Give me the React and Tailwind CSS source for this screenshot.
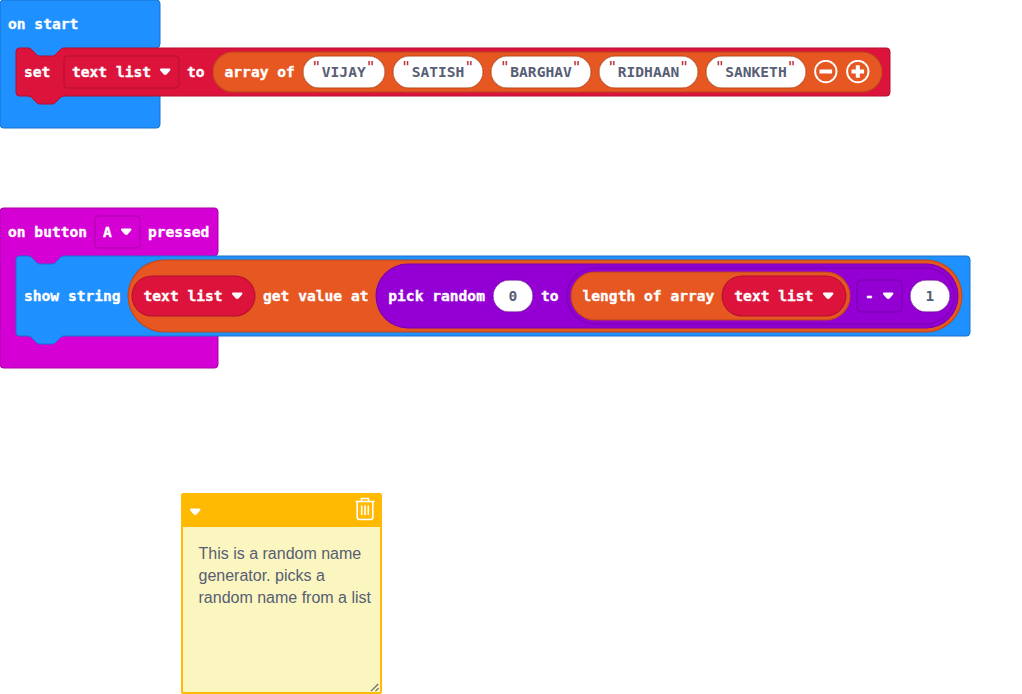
import React from "react";

const BLUE = "bg-[#1e90ff] shadow-[0_0_0_0.5px_#1873cc,inset_0_0_0_0.5px_#1873cc]";
const RED = "bg-[#dc143c] shadow-[0_0_0_0.5px_#b01030,inset_0_0_0_0.5px_#b01030]";
const ORANGE = "bg-[#e65722] shadow-[0_0_0_0.5px_#b8461b,inset_0_0_0_0.5px_#b8461b]";
const MAGENTA = "bg-[#d400d4] shadow-[0_0_0_0.5px_#aa00aa,inset_0_0_0_0.5px_#aa00aa]";
const PURPLE = "bg-[#9400d3] shadow-[0_0_0_0.5px_#7600a9,inset_0_0_0_0.5px_#7600a9]";

const NOTCH = "c2,0 3,1 4,2 l4,4 c1,1 2,2 4,2 h12 c2,0 3,-1 4,-2 l4,-4 c1,-1 2,-2 4,-2";

function Label({ children, className = "" }) {
  return <span className={"shrink-0 whitespace-pre [-webkit-text-stroke:0.35px_currentColor] " + className}>{children}</span>;
}

function Arrow({ className = "" }) {
  return (
    <svg width="12" height="8" viewBox="0 0 12 8" className={"shrink-0 " + className}>
      <path
        d="M2 0.4 H10.4 C11.4 0.4 11.8 1.6 11.1 2.4 L7.8 6.2 C6.9 7.2 5.5 7.2 4.6 6.2 L1.3 2.4 C0.6 1.6 1 0.4 2 0.4 Z"
        fill="#fff"
      />
    </svg>
  );
}

function Dropdown({ text, className = "" }) {
  return (
    <div className={"flex h-8 shrink-0 items-center justify-between rounded-[4px] pr-[8px] pl-2 " + className}>
      <Label>{text}</Label>
      <Arrow />
    </div>
  );
}

function Variable({ className = "" }) {
  return (
    <div className={"flex h-10 w-[123.5px] shrink-0 items-center justify-between rounded-full pr-[12px] pl-3 " + RED + " " + className}>
      <Label>text list</Label>
      <Arrow />
    </div>
  );
}

function TextField({ text, className }) {
  return (
    <div
      className={
        "flex h-8 shrink-0 items-center justify-center rounded-full bg-white text-[#575e75] shadow-[0_0_0_0.5px_#b8461b,inset_0_0_0_0.5px_#b8461b] " +
        className
      }
    >
      <span className="-mt-2 w-[9.3px] text-[16px] font-normal text-[#b3262e] -indent-[1px]">"</span>
      <span className="shrink-0">{text}</span>
      <span className="-mt-2 w-[9.3px] text-[16px] font-normal text-[#b3262e]">"</span>
    </div>
  );
}

function NumberField({ value }) {
  return (
    <div className="flex h-8 w-10 shrink-0 items-center justify-center rounded-full bg-white text-[#575e75] shadow-[0_0_0_0.5px_#7600a9,inset_0_0_0_0.5px_#7600a9]">
      {value}
    </div>
  );
}

function RoundButton({ plus = false }) {
  return (
    <svg width="24" height="24" viewBox="0 0 24 24" className="shrink-0">
      <circle cx="11.8" cy="11.5" r="10.7" fill="none" stroke="#fff" strokeWidth="1.9" />
      <path d={plus ? "M5.5 11.5 H18.1 M11.8 5.2 V17.8" : "M5.5 11.5 H18.1"} stroke="#fff" strokeWidth="4" />
    </svg>
  );
}

function Statement({ className, parent, fill, line, children }) {
  return (
    <div className={"relative ml-4 flex shrink-0 items-center rounded-[4px] pl-2 " + className}>
      <svg width="40" height="11" viewBox="0 0 40 11" className="absolute top-[-1px] left-[10px]">
        <path d={"M2,0 V1 " + NOTCH + " V0 Z"} fill={parent} />
        <path d={"M2,1 " + NOTCH} fill="none" stroke={line} />
      </svg>
      <svg width="40" height="11" viewBox="0 0 40 11" className="absolute bottom-[-9px] left-[10px]">
        <path d={"M2,0 V2 " + NOTCH + " V0 Z"} fill={fill} />
        <path d={"M2,2 " + NOTCH} fill="none" stroke={line} />
      </svg>
      {children}
    </div>
  );
}

function EventBlock({ className, header, line, children }) {
  return (
    <div className={"flex flex-col rounded-[4px] " + className}>
      <div className="relative flex h-12 shrink-0 items-center pl-2">
        {header}
        <svg width="5" height="5" viewBox="0 0 5 5" className="absolute right-[-1px] bottom-0">
          <path d="M5,0 H4 C4,3 3,5 0,5 H5 Z" fill="#fff" />
          <path d="M4,0 V1 A4,4 0 0 1 0,5" fill="none" stroke={line} />
        </svg>
      </div>
      {children}
    </div>
  );
}

function Note() {
  return (
    <div className="absolute top-[493px] left-[181px] flex h-[201px] w-[201px] flex-col rounded-[2px] border-2 border-[#ffbb05] bg-[#fbf5bf]">
      <div className="flex h-8 shrink-0 items-start justify-between bg-[#ffb900] pr-[5px] pl-[6px]">
        <Arrow className="mt-[12.5px]" />
        <svg width="20" height="24" viewBox="0 0 20 24" className="mt-[2px]" fill="none" stroke="#fff" strokeWidth="1.6">
          <path d="M0.5 4.5 H19.5 M6.5 4.5 V1.5 H13.5 V4.5 M2.2 4.5 V20 Q2.2 22.5 4.5 22.5 H15.5 Q17.8 22.5 17.8 20 V4.5" />
          <path d="M6.7 8.5 V18 M10 8.5 V18 M13.3 8.5 V18" />
        </svg>
      </div>
      <p className="w-[192px] pt-[16px] pl-[15.5px] font-['Liberation_Sans',sans-serif] text-[16px] leading-[22px] font-normal text-[#575e75]">
        This is a random name
        <br />
        generator. picks a
        <br />
        random name from a list
      </p>
      <svg width="10" height="9" viewBox="0 0 10 9" className="mt-auto self-end" stroke="#666a62" strokeWidth="1.2">
        <path d="M1 8.2 L8.2 1 M5.5 8.2 L8.6 5.1" />
      </svg>
    </div>
  );
}

export default function App() {
  return (
    <div className="relative h-[694px] w-[1022px] overflow-hidden bg-white font-['DejaVu_Sans_Mono',monospace] text-[14.6px] leading-4 font-bold text-white">
      <EventBlock
        className={"absolute top-0 left-0 h-32 w-40 " + BLUE}
        line="#1873cc"
        header={<Label>on start</Label>}
      >
        <Statement className={"h-12 w-[874px] " + RED} parent="#1e90ff" fill="#dc143c" line="#b01030">
          <Label>set</Label>
          <Dropdown text="text list" className="ml-[13.6px] w-[115px] shadow-[0_0_0_0.5px_#b01030,inset_0_0_0_0.5px_#b01030]" />
          <Label className="ml-2">to</Label>
          <div className={"ml-2 flex h-10 w-[669px] shrink-0 items-center gap-[8.05px] rounded-full pl-[12px] " + ORANGE}>
            <Label>array of</Label>
            <TextField text="VIJAY" className="w-[81.8px]" />
            <TextField text="SATISH" className="w-[90.6px]" />
            <TextField text="BARGHAV" className="w-[99.4px]" />
            <TextField text="RIDHAAN" className="w-[99.4px]" />
            <TextField text="SANKETH" className="w-[99.4px]" />
            <RoundButton />
            <RoundButton plus />
          </div>
        </Statement>
      </EventBlock>

      <EventBlock
        className={"absolute top-52 left-0 h-40 w-[217.5px] " + MAGENTA}
        line="#aa00aa"
        header={
          <>
            <Label>on button</Label>
            <Dropdown text="A" className="mx-2 w-[44.8px] shadow-[0_0_0_0.5px_#aa00aa,inset_0_0_0_0.5px_#aa00aa]" />
            <Label>pressed</Label>
          </>
        }
      >
        <Statement className={"h-20 w-[954px] " + BLUE} parent="#d400d4" fill="#1e90ff" line="#1873cc">
          <Label>show string</Label>
          <div className={"ml-[7.4px] flex h-18 w-[834px] shrink-0 items-center rounded-full pl-[3.5px] " + ORANGE}>
            <Variable />
            <Label className="ml-2">get value at</Label>
            <div className={"ml-[7.8px] flex h-16 w-[582px] shrink-0 items-center rounded-full pl-3 " + PURPLE}>
              <Label>pick random</Label>
              <div className="ml-2 flex">
                <NumberField value="0" />
              </div>
              <Label className="ml-2">to</Label>
              <div className={"ml-[8px] flex h-14 w-[387.5px] shrink-0 items-center rounded-full pl-[4px] " + PURPLE}>
                <div className={"flex h-12 w-[279px] shrink-0 items-center rounded-full pl-3 " + ORANGE}>
                  <Label>length of array</Label>
                  <Variable className="ml-2" />
                </div>
                <Dropdown text="-" className="mr-2 ml-[7.5px] w-[45px] shadow-[0_0_0_0.5px_#7600a9,inset_0_0_0_0.5px_#7600a9]" />
                <NumberField value="1" />
              </div>
            </div>
          </div>
        </Statement>
      </EventBlock>

      <Note />
    </div>
  );
}
